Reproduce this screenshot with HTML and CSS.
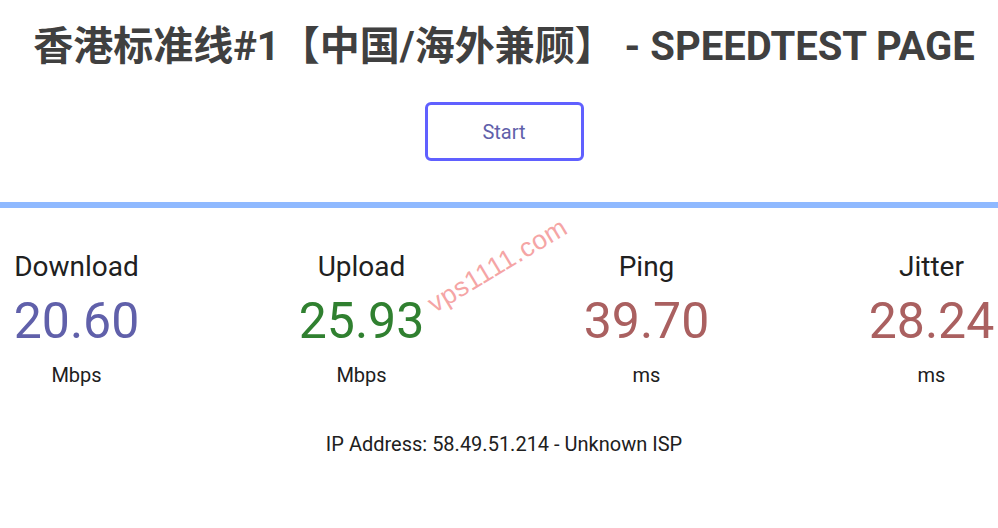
FILE: index.html
```html
<!DOCTYPE html>
<html lang="zh">
<head>
<meta charset="utf-8">
<title>SPEEDTEST PAGE</title>
<link rel="stylesheet" href="styles.css">
</head>
<body>
<div class="page">
  <h1 class="title">香港标准线#1【中国/海外兼顾】 - SPEEDTEST PAGE</h1>
  <div class="start-row"><button class="start-btn">Start</button></div>
  <div class="bar"></div>
  <div class="tests">
    <div class="test">
      <div class="label">Download</div>
      <div class="value dl">20.60</div>
      <div class="unit">Mbps</div>
    </div>
    <div class="test">
      <div class="label">Upload</div>
      <div class="value ul">25.93</div>
      <div class="unit">Mbps</div>
    </div>
    <div class="test">
      <div class="label">Ping</div>
      <div class="value ping">39.70</div>
      <div class="unit">ms</div>
    </div>
    <div class="test">
      <div class="label">Jitter</div>
      <div class="value ping">28.24</div>
      <div class="unit">ms</div>
    </div>
  </div>
  <div class="ip">IP Address: 58.49.51.214 - Unknown ISP</div>
  <div class="watermark">vps1111.com</div>
</div>
</body>
</html>
```
FILE: styles.css
```css
html, body {
  margin: 0;
  padding: 0;
  background: #ffffff;
  overflow: hidden;
}
body {
  font-family: Roboto, "Noto Sans CJK SC", sans-serif;
  color: #202020;
}
.page {
  position: relative;
  width: 1008px;
  height: 528px;
}
.title {
  margin: 0;
  padding-top: 24px;
  height: 46px;
  line-height: 46px;
  text-align: center;
  font-size: 40px;
  font-weight: 700;
  color: #404040;
  white-space: nowrap;
  font-family: Roboto, "Noto Sans CJK SC", sans-serif;
}
.start-row {
  display: flex;
  justify-content: center;
  margin-top: 32px;
}
.start-btn {
  box-sizing: border-box;
  width: 159px;
  height: 59px;
  border: 3px solid #6060ff;
  border-radius: 6px;
  background: #ffffff;
  color: #6060aa;
  font-family: Roboto, sans-serif;
  font-size: 20px;
  padding: 0;
}
.bar {
  margin-top: 41px;
  height: 6px;
  background: #8fb9ff;
}
.tests {
  display: flex;
  width: 1140px;
  margin-left: -66px;
  margin-top: 42px;
}
.test {
  width: 285px;
  text-align: center;
}
.label {
  font-size: 28px;
  line-height: 34px;
  color: #202020;
}
.value {
  font-size: 50px;
  line-height: 56px;
  margin-top: 9px;
}
.dl { color: #6060aa; }
.ul { color: #308030; }
.ping { color: #aa6060; }
.unit {
  font-size: 20px;
  line-height: 24px;
  margin-top: 14px;
}
.ip {
  text-align: center;
  font-size: 20px;
  line-height: 24px;
  margin-top: 45px;
}
.watermark {
  position: absolute;
  left: 419px;
  top: 250px;
  font-family: "Liberation Sans", Arial, sans-serif;
  font-size: 26.5px;
  color: #f5a5a5;
  transform: rotate(-31deg);
  transform-origin: center;
  letter-spacing: 0.5px;
}
```
